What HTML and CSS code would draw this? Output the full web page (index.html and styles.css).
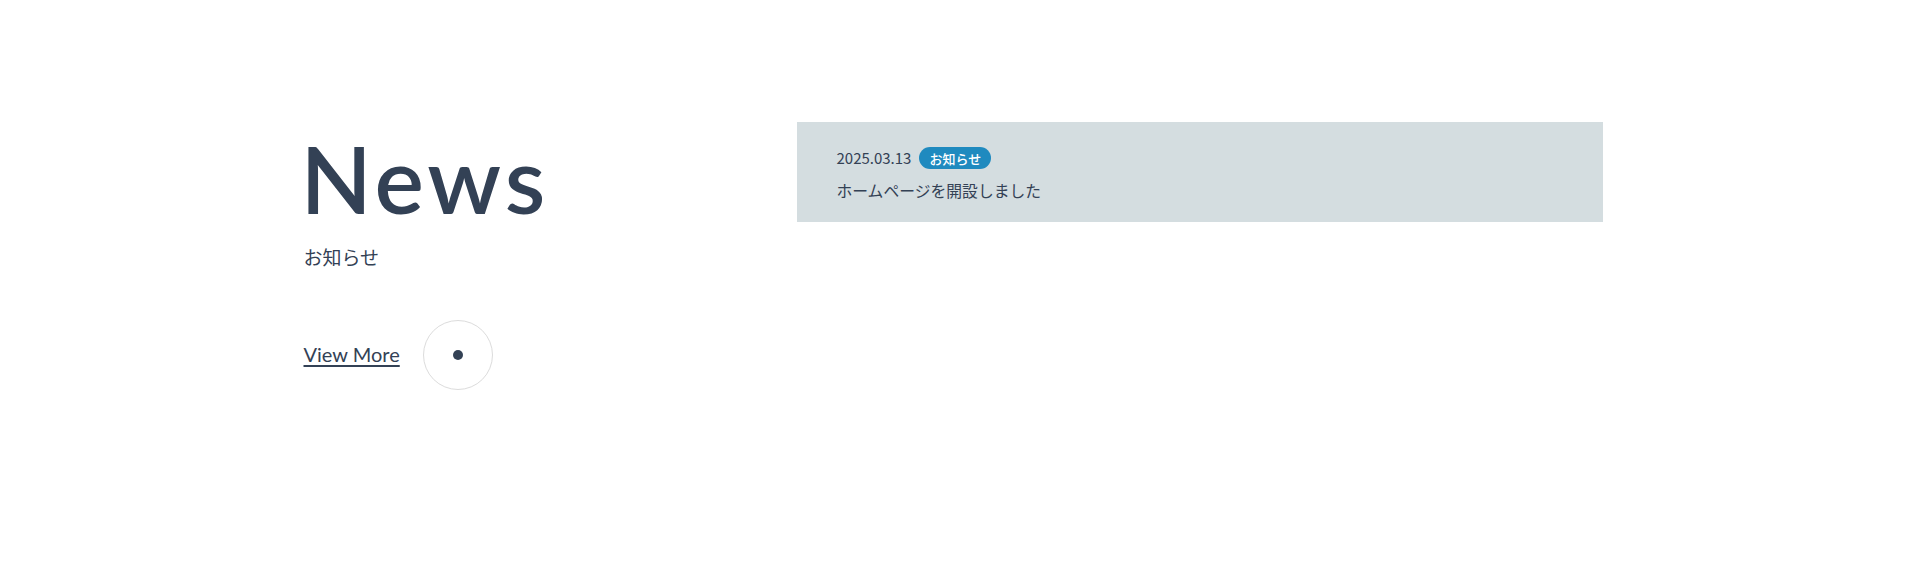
FILE: index.html
```html
<!DOCTYPE html>
<html lang="ja">
<head>
<meta charset="utf-8">
<title>News</title>
<link rel="stylesheet" href="styles.css">
</head>
<body>
<section class="news">
  <div class="container">
    <div class="news-head">
      <h2 class="title">News</h2>
      <p class="sub">お知らせ</p>
      <a class="more" href="#">
        <span class="more-label">View More</span>
        <span class="more-circle"><span class="more-dot"></span></span>
      </a>
    </div>
    <ul class="list">
      <li class="item">
        <div class="meta">
          <time class="date">2025.03.13</time>
          <span class="badge">お知らせ</span>
        </div>
        <p class="text">ホームページを開設しました</p>
      </li>
    </ul>
  </div>
</section>
</body>
</html>
```
FILE: styles.css
```css
* { box-sizing: border-box; }
html, body { margin: 0; padding: 0; background: #ffffff; }
body {
  color: #334155;
  font-family: "Noto Sans CJK JP", "Noto Sans", sans-serif;
}
.news {
  height: 582px;
  padding-top: 122px;
}
.container {
  width: 1299px;
  margin: 0 auto;
  display: grid;
  grid-template-columns: 493px 1fr;
}
.news-head {
  display: flex;
  flex-direction: column;
  align-items: flex-start;
}
.title {
  margin: 10px 0 0 -3px;
  font-family: "Lato", sans-serif;
  font-weight: 600;
  font-size: 93px;
  line-height: 1;
  letter-spacing: 4px;
  color: #334155;
}
.sub {
  margin: 18px 0 0 0;
  font-size: 19px;
  line-height: 1.5;
  color: #334155;
}
.more {
  margin-top: 48px;
  display: flex;
  align-items: center;
  gap: 23px;
  text-decoration: none;
  color: #334155;
}
.more-label {
  font-family: "Lato", sans-serif;
  font-size: 20px;
  line-height: 1;
  text-decoration: underline;
  text-decoration-thickness: 1.5px;
  text-underline-offset: 3px;
  margin-bottom: 2px;
}
.more-circle {
  width: 70px;
  height: 70px;
  border: 1px solid #dcdcdc;
  border-radius: 50%;
  display: flex;
  align-items: center;
  justify-content: center;
}
.more-dot {
  width: 10px;
  height: 10px;
  border-radius: 50%;
  background: #334155;
}
.list {
  list-style: none;
  margin: 0;
  padding: 0;
}
.item {
  background: #d4dde0;
  padding: 25px 40px 19px;
}
.meta {
  display: flex;
  align-items: center;
  gap: 8px;
}
.date {
  font-size: 15px;
  line-height: 22px;
  color: #334155;
}
.badge {
  display: inline-flex;
  align-items: center;
  justify-content: center;
  height: 22px;
  padding: 0 10px;
  border-radius: 11px;
  background: #1f8abf;
  color: #ffffff;
  font-size: 13px;
  font-weight: 500;
  line-height: 1;
}
.text {
  margin: 10px 0 0 0;
  font-size: 15.8px;
  line-height: 24px;
  color: #334155;
}
```
